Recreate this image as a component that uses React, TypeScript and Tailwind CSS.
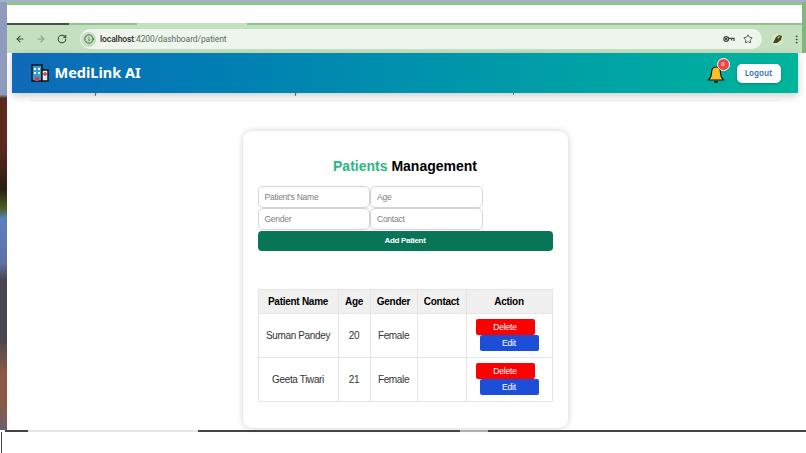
import { ArrowLeft, ArrowRight, RotateCw, Info, Star, MoreVertical } from "lucide-react";

const rows = [
  { name: "Suman Pandey", age: "20", gender: "Female" },
  { name: "Geeta Tiwari", age: "21", gender: "Female" },
];

function Field({ label }: { label: string }) {
  return (
    <div className="h-[22px] w-[112.5px] rounded-[5px] border border-[#d4d4d4] bg-white pl-[6px] text-[8.5px] leading-[20px] tracking-[-0.25px] text-[#808080]">
      {label}
    </div>
  );
}

export default function App() {
  return (
    <div className="relative flex h-[453px] w-[806px] flex-col overflow-hidden bg-white [font-family:'Liberation_Sans',sans-serif]">
      <div className="h-[2px] bg-[#a6aecb]" />
      <div className="flex h-[51px]">
        <div className="w-[7px] bg-[#8f9bbd]" />
        <div className="flex flex-1 flex-col bg-[#c4e0c0]">
          <div className="h-[3px] bg-[#8cc68a]" />
          <div className="h-[18px] bg-white" />
          <div className="flex h-[2px]">
            <div className="w-[62px] bg-[#3d5a3d]" />
            <div className="w-[68px] bg-[#8cc68a]" />
            <div className="w-[110px] bg-[#c4e0c0]" />
            <div className="flex-1 bg-[#8cc68a]" />
          </div>
          <div className="flex h-[28px] items-center">
            <div className="flex w-[73px] items-center gap-[11px] pl-[8px] text-[#2f4a38]">
              <ArrowLeft size={10} strokeWidth={2.5} />
              <ArrowRight size={10} strokeWidth={2.5} className="text-[#7d9c85]" />
              <RotateCw size={10} strokeWidth={2.5} />
            </div>
            <div className="flex h-[20px] w-[682px] items-center rounded-full bg-[#eef5ec]">
              <div className="ml-[1px] flex h-[15px] w-[15px] items-center justify-center rounded-full bg-[#c4e0c0]">
                <Info size={10} className="text-[#2f4a38]" />
              </div>
              <span className="ml-[4px] [font-family:Roboto,sans-serif] text-[8.5px] tracking-[-0.1px] text-[#5c6b60]">
                <span className="font-medium text-[#1f2a22]">localhost</span>:4200/dashboard/patient
              </span>
              <svg width="12" height="8" viewBox="0 0 12 8" className="ml-auto text-[#3c4a40]" fill="none" stroke="currentColor" strokeWidth="1.2">
                <circle cx="3.2" cy="4" r="2.4" />
                <circle cx="3.2" cy="4" r="0.7" fill="currentColor" />
                <path d="M5.6 3.4H11V6M8.5 3.4V5.4" />
              </svg>
              <Star size={10} className="ml-[8px] mr-[9px] text-[#3c4a40]" />
            </div>
            <svg width="13" height="13" viewBox="0 0 13 13" className="ml-[9px]">
              <circle cx="6.5" cy="6.5" r="6" fill="#d8e6cf" />
              <path d="M2 10 5 4l3-2 3 1-1 4-4 3z" fill="#3f4a1f" />
              <path d="M6 4l3-1-1 3z" fill="#c9a23a" />
            </svg>
            <MoreVertical size={11} className="ml-[7px] text-[#2f4a38]" />
          </div>
        </div>
        <div className="w-[4px] bg-[#7fb87d]" />
      </div>

      <div className="flex h-[377px]">
        <div className="w-[7px] bg-[linear-gradient(180deg,#8f9bbd_0%,#8f9bbd_11%,#5a2a20_12%,#5a2a20_25%,#2a1e10_36%,#4a5a20_41%,#5a80c0_44%,#6070a0_56%,#4a4650_60%,#4a4650_76%,#8a5a45_85%,#8a5a45_93%,#6a6070_100%)]" />
        <div className="relative flex flex-1 flex-col items-center bg-white">
          <div className="relative z-10 flex h-[40px] w-[786px] items-center bg-gradient-to-r from-[#0f69b9] to-[#00b59b] pl-[19px] pr-[17px] shadow-[0_3px_8px_rgba(0,0,0,0.2)]">
            <svg width="18" height="18" viewBox="0 0 18 18">
              <rect x="1" y="1" width="10" height="16" fill="#2a9fd8" stroke="#111" strokeWidth="1.5" />
              <rect x="11" y="6" width="6" height="11" fill="#e8e8e8" stroke="#111" strokeWidth="1.5" />
              <rect x="3" y="4" width="2" height="2" fill="#fff" />
              <rect x="7" y="4" width="2" height="2" fill="#fff" />
              <rect x="3" y="8" width="2" height="2" fill="#fff" />
              <rect x="7" y="8" width="2" height="2" fill="#fff" />
              <rect x="4" y="13" width="4" height="4" fill="#e5333f" />
              <path d="M14 8v4M12 10h4" stroke="#e5333f" strokeWidth="1.5" />
            </svg>
            <span className="ml-[6px] [font-family:'Noto_Sans',sans-serif] text-[14.5px] font-bold text-white">MediLink AI</span>
            <div className="relative ml-auto mr-[11px] h-[24px] w-[20px] translate-x-[1px] -translate-y-[1px]">
              <svg width="18" height="19" viewBox="0 0 18 19" className="absolute bottom-0 left-0">
                <path d="M9 2C5.5 2 4.5 5 4.5 8c0 3-1 5-3 7h15c-2-2-3-4-3-7 0-3-1-6-4.5-6z" fill="#fbbf24" stroke="#111" strokeWidth="1.2" />
                <path d="M7 16c0 1.5 1 2 2 2s2-.5 2-2z" fill="#111" />
              </svg>
              <div className="absolute -right-[3px] -top-[2px] flex h-[13px] w-[13px] items-center justify-center rounded-full border border-white bg-[#ef4444] text-[6px] text-white">0</div>
            </div>
            <div className="flex h-[19px] w-[44px] items-center justify-center rounded-[5px] bg-white [font-family:'Noto_Sans',sans-serif] text-[8px] font-semibold text-[#2f74c0] shadow-[0_1px_3px_rgba(0,0,0,0.25)]">Logout</div>
          </div>

          <div className="absolute left-[88px] top-[40px] h-[3px] w-[1px] rotate-12 bg-[#666]" />
          <div className="absolute left-[288px] top-[40px] h-[3px] w-[1px] rotate-12 bg-[#666]" />
          <div className="absolute left-[506px] top-[40px] h-[2px] w-[1px] bg-[#888]" />
          <div className="mt-[7px] h-[1px] w-[750px] bg-[#f4f4f4]" />

          <div className="ml-[1px] mt-[30px] h-[297px] w-[325px] rounded-[9px] bg-white px-[15px] pt-[26px] shadow-[0_0_6px_rgba(0,0,0,0.2)]">
            <h1 className="text-center text-[14px] font-bold leading-[18px] text-[#000]">
              <span className="text-[#2cb783]">Patients</span> Management
            </h1>
            <div className="mt-[11px] flex">
              <Field label="Patient's Name" />
              <Field label="Age" />
            </div>
            <div className="flex">
              <Field label="Gender" />
              <Field label="Contact" />
            </div>
            <div className="mt-[1px] flex h-[19.5px] items-center justify-center rounded-[4px] bg-[#087556] text-[8px] font-bold tracking-[-0.3px] text-white">Add Patient</div>
            <table className="mt-[38.5px] w-[295px] table-fixed border-collapse text-center text-[10px] tracking-[-0.35px] text-[#333]">
              <thead>
                <tr className="h-[24px] bg-[#f0f0f0] font-bold tracking-[-0.27px] text-[#000]">
                  <th className="w-[80px] border border-[#e5e5e5]">Patient Name</th>
                  <th className="w-[32px] border border-[#e5e5e5]">Age</th>
                  <th className="w-[47px] border border-[#e5e5e5]">Gender</th>
                  <th className="w-[49px] border border-[#e5e5e5]">Contact</th>
                  <th className="border border-[#e5e5e5]">Action</th>
                </tr>
              </thead>
              <tbody>
                {rows.map((r) => (
                  <tr key={r.name} className="h-[44px]">
                    <td className="border border-[#e5e5e5]">{r.name}</td>
                    <td className="border border-[#e5e5e5]">{r.age}</td>
                    <td className="border border-[#e5e5e5]">{r.gender}</td>
                    <td className="border border-[#e5e5e5]" />
                    <td className="border border-[#e5e5e5] pb-[1px] pl-[9px] text-[8.5px] tracking-[-0.2px] text-white">
                      <div className="flex h-[16px] w-[59px] items-center justify-center rounded-[2px] bg-[#ff0000]">Delete</div>
                      <div className="ml-[4px] flex h-[16px] w-[59px] items-center justify-center rounded-[2px] bg-[#1d4ed8]">Edit</div>
                    </td>
                  </tr>
                ))}
              </tbody>
            </table>
          </div>
        </div>
        <div className="w-[4px] bg-white" />
      </div>

      <div className="flex h-[23px] flex-col bg-white">
        <div className="flex h-[2px] pl-[5px]">
          <div className="w-[23px] bg-[#444]" />
          <div className="w-[170px] bg-[#e5e5e5]" />
          <div className="w-[262px] bg-[#4a4545]" />
          <div className="w-[28px] bg-[#b5b5b5]" />
          <div className="flex-1 bg-[#4a4545]" />
        </div>
        <div className="ml-[1px] h-[21px] w-[1px] bg-[#444]" />
      </div>
    </div>
  );
}
